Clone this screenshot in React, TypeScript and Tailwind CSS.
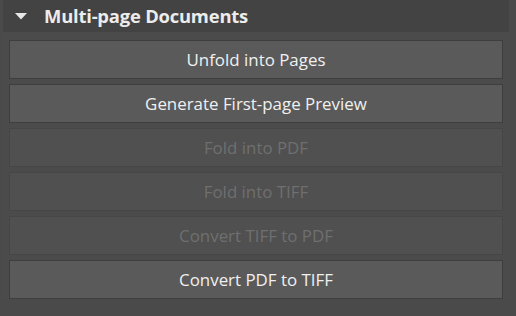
import React from 'react';

const actions = [
  { label: 'Unfold into Pages', enabled: true },
  { label: 'Generate First-page Preview', enabled: true },
  { label: 'Fold into PDF', enabled: false },
  { label: 'Fold into TIFF', enabled: false },
  { label: 'Convert TIFF to PDF', enabled: false },
  { label: 'Convert PDF to TIFF', enabled: true },
];

export default function App() {
  return (
    <div
      className="flex h-[316px] w-[516px] bg-[#4a4a4a] pl-[3px] pr-[7px]"
      style={{ fontFamily: '"Open Sans", "Noto Sans", sans-serif' }}
    >
      <div className="flex flex-1 flex-col">
        <div className="flex h-[32px] items-center gap-[17px] bg-[#434343] pl-[12px]">
          <svg width="12" height="7" viewBox="0 0 12 7">
            <polygon points="0,0 12,0 6,6.5" fill="#e8e8e8" />
          </svg>
          <span className="text-[18.4px] font-bold tracking-[-0.2px] text-[#ececec]">Multi-page Documents</span>
        </div>
        <div className="flex flex-col gap-[5px] bg-[#4b4b4b] px-[6px] pt-[8px]">
          {actions.map((action) => (
            <button
              key={action.label}
              type="button"
              disabled={!action.enabled}
              className={
                action.enabled
                  ? 'h-[39px] border border-[#3e3e3e] bg-[#5a5a5a] text-[16.9px] text-[#f0f0f0]'
                  : 'h-[39px] border border-[#464646] bg-[#505050] text-[16.9px] text-[#6f6f6f]'
              }
            >
              {action.label}
            </button>
          ))}
        </div>
      </div>
    </div>
  );
}
